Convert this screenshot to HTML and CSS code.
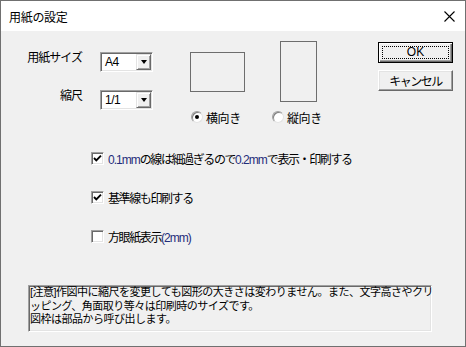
FILE: index.html
```html
<!DOCTYPE html>
<html lang="ja">
<head>
    <meta charset="UTF-8">
    <title>用紙の設定</title>
    <link rel="stylesheet" href="styles.css">
</head>
<body>
    <div class="dialog">
        <!-- タイトルバー -->
        <div class="titlebar">
            <span class="title">用紙の設定</span>
            <svg class="close" width="11" height="11" viewBox="0 0 11 11">
                <path d="M0.5 0.5L10.5 10.5M10.5 0.5L0.5 10.5" stroke="#000" stroke-width="1.1" fill="none"/>
            </svg>
        </div>

        <div class="dialog-body">
            <div class="top">
                <div class="fields">
                    <span class="field-label">用紙サイズ</span>
                    <div class="combo">
                        <span class="combo-value">A4</span>
                        <span class="combo-btn"><i class="arrow"></i></span>
                    </div>
                    <span class="field-label">縮尺</span>
                    <div class="combo">
                        <span class="combo-value">1/1</span>
                        <span class="combo-btn"><i class="arrow"></i></span>
                    </div>
                </div>

                <div class="orient">
                    <div class="orient-opt opt-land">
                        <div class="preview"><div class="paper landscape"></div></div>
                        <div class="radio-row first"><span class="radio checked"></span><span>横向き</span></div>
                    </div>
                    <div class="orient-opt">
                        <div class="preview"><div class="paper portrait"></div></div>
                        <div class="radio-row"><span class="radio"></span><span>縦向き</span></div>
                    </div>
                </div>

                <div class="buttons">
                    <button class="btn default"><span class="focus">OK</span></button>
                    <button class="btn">キャンセル</button>
                </div>
            </div>

            <div class="checks">
                <div class="check-row">
                    <span class="checkbox"><svg width="9" height="9" viewBox="0 0 9 9"><path d="M1 4L3.3 6.3L8 1.6" stroke="#000" stroke-width="1.9" fill="none"/></svg></span>
                    <span><span class="num">0.1mm</span>の線は細過ぎるので<span class="num">0.2mm</span>で表示・印刷する</span>
                </div>
                <div class="check-row">
                    <span class="checkbox"><svg width="9" height="9" viewBox="0 0 9 9"><path d="M1 4L3.3 6.3L8 1.6" stroke="#000" stroke-width="1.9" fill="none"/></svg></span>
                    <span>基準線も印刷する</span>
                </div>
                <div class="check-row">
                    <span class="checkbox"></span>
                    <span>方眼紙表示<span class="num">(2mm)</span></span>
                </div>
            </div>

            <div class="note">
                [注意]作図中に縮尺を変更しても図形の大きさは変わりません。また、文字高さやクリ<br>
                ッピング、角面取り等々は印刷時のサイズです。<br>
                図枠は部品から呼び出します。
            </div>
        </div>
    </div>
</body>
</html>
```

FILE: styles.css
```css
body {
    margin: 0;
    background-color: #fff;
    font-family: "Liberation Sans", "Noto Sans CJK JP", sans-serif;
    font-size: 12px;
    color: #000;
}

.dialog {
    width: 466px;
    height: 347px;
    box-sizing: border-box;
    border: 1px solid #707070;
    display: flex;
    flex-direction: column;
}

.titlebar {
    height: 30px;
    flex-shrink: 0;
    background-color: #fff;
    display: flex;
    align-items: center;
    justify-content: space-between;
    padding: 0 10px 0 8px;
}

.title {
    font-size: 12px;
    letter-spacing: -0.3px;
}

.dialog-body {
    flex: 1;
    background-color: #f0f0f0;
}

.top {
    display: flex;
    align-items: flex-start;
    padding-left: 27px;
}

.fields {
    display: grid;
    grid-template-columns: 54px 53px;
    column-gap: 18px;
    row-gap: 18px;
    margin-top: 21px;
}

.field-label {
    justify-self: end;
    line-height: 12px;
    letter-spacing: -1px;
    white-space: nowrap;
}

.combo {
    width: 53px;
    height: 20px;
    box-sizing: border-box;
    background-color: #fff;
    border: 1px solid;
    border-color: #a0a0a0 #fff #fff #a0a0a0;
    box-shadow: inset 1px 1px #696969, inset -1px -1px #e3e3e3;
    display: flex;
    align-items: center;
    padding: 1px;
}

.combo-value {
    flex: 1;
    padding-left: 3px;
    letter-spacing: -0.5px;
}

.combo-btn {
    width: 15px;
    height: 16px;
    box-sizing: border-box;
    background-color: #f0f0f0;
    border: 1px solid;
    border-color: #e3e3e3 #696969 #696969 #e3e3e3;
    box-shadow: inset 1px 1px #fff, inset -1px -1px #a0a0a0;
    display: flex;
    align-items: center;
    justify-content: center;
}

.arrow {
    width: 0;
    height: 0;
    border-top: 4px solid #000;
    border-left: 3.5px solid transparent;
    border-right: 3.5px solid transparent;
}

.orient {
    display: flex;
    margin-left: 37px;
    margin-top: 10px;
}

.orient-opt {
    display: flex;
    flex-direction: column;
}

.opt-land {
    width: 82px;
}

.preview {
    height: 61px;
    display: flex;
    align-items: center;
}

.paper {
    box-sizing: border-box;
    border: 1px solid #6d6d6d;
}

.landscape {
    width: 55px;
    height: 40px;
}

.portrait {
    width: 37px;
    height: 61px;
    margin-left: 8px;
}

.radio-row {
    display: flex;
    align-items: center;
    gap: 3px;
    height: 12px;
    margin-top: 9px;
    letter-spacing: -0.4px;
}

.radio-row.first {
    margin-left: 1px;
}

.radio {
    width: 12px;
    height: 12px;
    box-sizing: border-box;
    border-radius: 50%;
    background-color: #fff;
    border: 1px solid;
    border-color: #a0a0a0 #e3e3e3 #e3e3e3 #a0a0a0;
    box-shadow: inset 1px 1px #808080;
    display: flex;
    align-items: center;
    justify-content: center;
}

.radio.checked::after {
    content: "";
    width: 4px;
    height: 4px;
    border-radius: 50%;
    background-color: #000;
}

.buttons {
    margin-left: auto;
    margin-right: 12px;
    margin-top: 11px;
    display: flex;
    flex-direction: column;
    gap: 7px;
}

.btn {
    width: 75px;
    height: 21px;
    box-sizing: border-box;
    padding: 0;
    font: inherit;
    letter-spacing: -1.5px;
    color: #000;
    background-color: #f0f0f0;
    border: 1px solid;
    border-color: #fff #696969 #696969 #fff;
    box-shadow: inset -1px -1px #a0a0a0, inset 1px 1px #e3e3e3;
}

.btn.default {
    border-color: #000;
    box-shadow: inset 1px 1px #fff, inset -1px -1px #696969, inset -2px -2px #a0a0a0;
    padding: 3px;
    letter-spacing: 0;
}

.btn .focus {
    display: block;
    height: 100%;
    box-sizing: border-box;
    border: 1px dotted #000;
    line-height: 11px;
}

.checks {
    display: flex;
    flex-direction: column;
    gap: 23px;
    margin-left: 90px;
    margin-top: 27px;
}

.check-row {
    display: flex;
    align-items: center;
    gap: 4px;
    height: 16px;
    letter-spacing: -1.4px;
    white-space: nowrap;
}

.checkbox {
    width: 13px;
    height: 13px;
    box-sizing: border-box;
    background-color: #fff;
    border: 1px solid;
    border-color: #a0a0a0 #fff #fff #a0a0a0;
    box-shadow: inset 1px 1px #696969, inset -1px -1px #e3e3e3;
    display: flex;
    align-items: center;
    justify-content: center;
}

.num {
    color: #1f2d7a;
    letter-spacing: -1px;
}

.note {
    width: 404px;
    height: 47px;
    box-sizing: border-box;
    margin: 41px 0 0 27px;
    border: 1px solid;
    border-color: #a0a0a0 #fff #fff #a0a0a0;
    box-shadow: inset 1px 1px #696969, inset -1px -1px #e3e3e3;
    padding: 0 1px;
    font-size: 11px;
    line-height: 13.5px;
    letter-spacing: -0.5px;
    white-space: nowrap;
}
```
